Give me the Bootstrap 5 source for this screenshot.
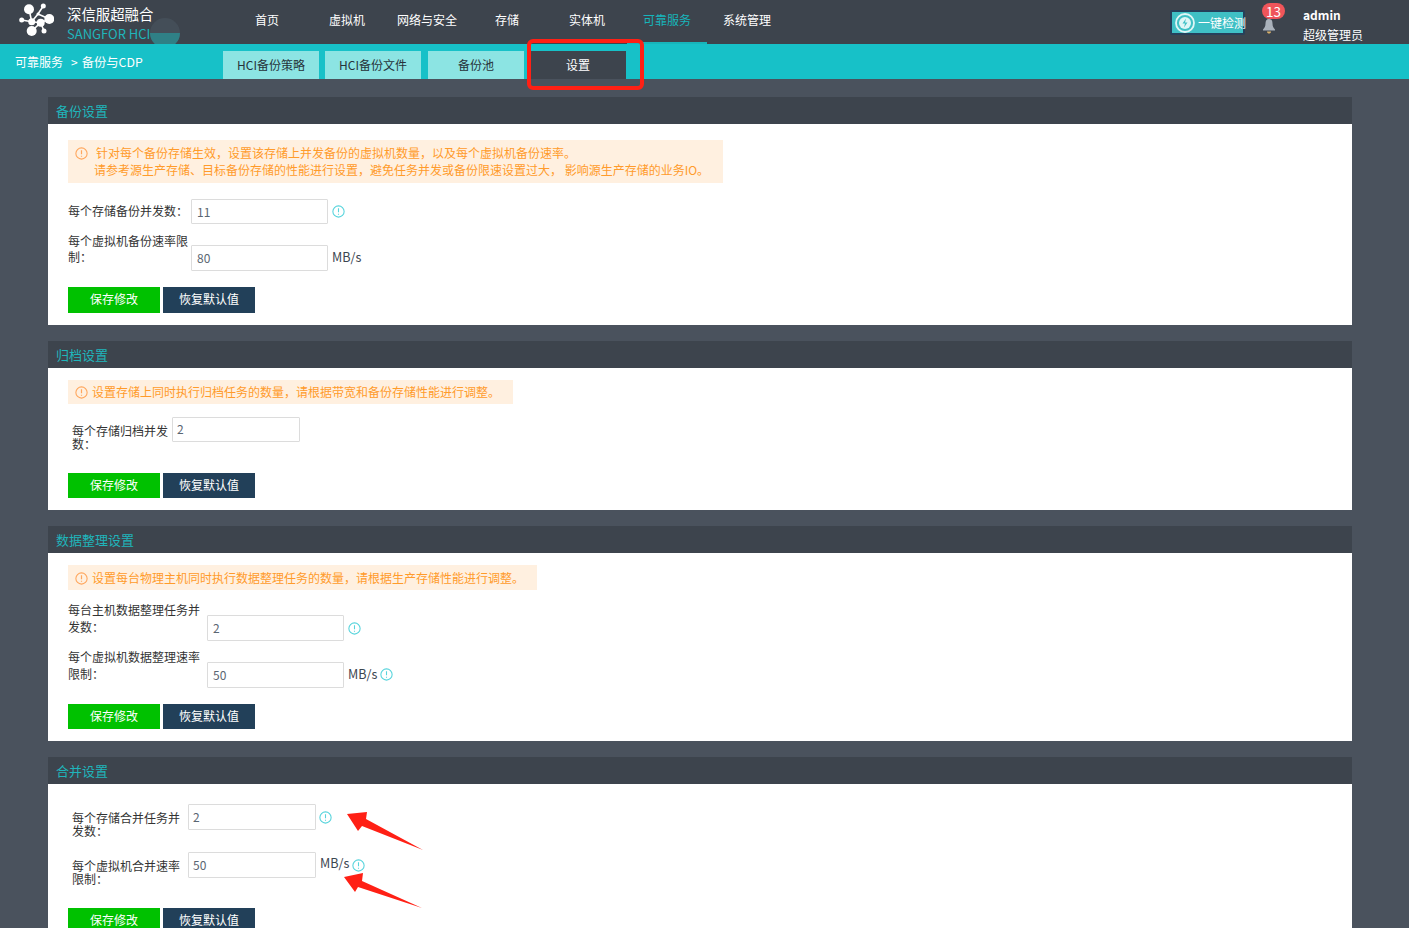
<!DOCTYPE html>
<html lang="zh-CN">
<head>
    <meta charset="UTF-8" />
    <title>可靠服务 - 备份与CDP</title>
    <link href="https://cdn.jsdelivr.net/npm/bootstrap@5.3.0/dist/css/bootstrap.min.css" rel="stylesheet" />
    <style>
        html, body { height: 100%; overflow: hidden; }
        body {
            background: #4a525d;
            font-family: "Noto Sans CJK SC", "Open Sans", sans-serif;
            font-size: 12px;
            color: #333;
        }
        .topbar { height: 44px; background: #3d444d; color: #fff; }
        .brand-box { width: 227px; position: relative; overflow: hidden; height: 44px; padding: 2px 0 0 18px; }
        .brand-logo { margin-right: 13px; flex: none; }
        .brand-name { font-size: 14.4px; line-height: 18px; padding-top: 3px; }
        .brand-sub { font-size: 13px; line-height: 18px; color: #1fb5bb; margin-top: 2px; }
        .spin-shape { position: absolute; left: 150px; top: 18px; }
        .main-nav .nav-link {
            width: 80px; height: 44px; line-height: 39px; padding: 0;
            text-align: center; color: #fff; font-size: 12px;
        }
        .main-nav .nav-link.active { color: #17b5bb; border-bottom: 2px solid #17b5bb; }
        .check-btn {
            position: absolute; left: 1170px; top: 10px; width: 75px; height: 25px;
            background: #3fc0c5; border: 2px solid #26405a; color: #fff; font-size: 12px;
            display: flex; align-items: center; white-space: nowrap; padding: 0 0 0 3px; border-radius: 2px;
        }
        .check-btn svg { margin-right: 3px; flex: none; }
        .bell-box { position: absolute; left: 1262px; top: 15px; }
        .bell-count {
            position: absolute; left: 1262px; top: 3px; width: 23px; height: 16px;
            background: #f0555a; color: #fff; border-radius: 8px; font-size: 13.5px; font-weight: 400;
            line-height: 16px; text-align: center; padding: 0;
        }
        .user-box { position: absolute; left: 1303px; top: 5px; line-height: 20px; }
        .subbar { height: 35px; background: #17c1c8; color: #fff; }
        .crumb-box { width: 223px; padding: 9px 0 0 15px; line-height: 18px; }
        .crumb-sep { margin: 0 4px 0 8px; }
        .crumb-box .crumb-end { font-size: 12.3px; }
        .tab-row { padding-top: 7px; gap: 6px; }
        .tab-row .nav-link {
            width: 96px; height: 28px; line-height: 27px; padding: 0; text-align: center;
            background: #8ce4e3; color: #27333a; font-size: 12px; border-radius: 0;
        }
        .tab-row .nav-link.tab-third { margin-left: 1px; }
        .tab-row .nav-link.active { background: #3d444d; color: #fff; }
        .panels { padding: 18px 57px 0 48px; display: flex; flex-direction: column; gap: 16px; }
        .panel-box { border: 0; border-radius: 0; background: #fff; }
        .panel-box .card-header {
            height: 27px; padding: 0 8px; line-height: 27px; background: #3d444d; color: #1fb5bb;
            font-size: 13px; border: 0; border-radius: 0;
        }
        .panel-box .card-body { padding: 0 20px; }
        .tip-box {
            background: #fff0e0; color: #ff9b2b; border: 0; border-radius: 0; margin: 0;
            padding: 5px 7px; line-height: 17px; font-size: 12px; width: fit-content;
        }
        .tip-icon { vertical-align: -2px; margin-right: 4px; }
        .form-line { display: flex; }
        .field-label { line-height: 16px; flex: none; margin: 0; }
        .field-label.wide-lead { line-height: 17px; margin-top: -1px; }
        .field-label.tight { line-height: 13px; padding-left: 4px; margin-top: 7px; }
        .w-a { width: 123px; }
        .w-b { width: 139px; }
        .w-c { width: 104px; }
        .w-d { width: 120px; }
        .field-input.form-control {
            width: 137px; height: 26px; padding: 0 5px 2px; font-size: 12px; color: #5b6672;
            border: 1px solid #dcdcdc; border-radius: 1px; flex: none; min-height: 0;
        }
        .field-input.short.form-control { width: 128px; padding: 0 4px 2px; }
        .unit-text { margin-left: 4px; color: #3c4650; font-size: 12.6px; }
        .info-mark { margin-left: 4px; flex: none; }
        .btn-line { display: flex; gap: 3px; }
        .btn-line .btn {
            width: 92px; height: 26px; padding: 0 0 2px; font-size: 12px; line-height: 24px;
            color: #fff; border: 0; border-radius: 0;
        }
        .btn-line.slim .btn { height: 25px; line-height: 23px; }
        .btn-save { background: #00c100; }
        .btn-reset { background: #224059; }
        .mark-layer { position: absolute; left: 0; top: 0; pointer-events: none; }
    </style>
</head>
<body>

<div class="topbar d-flex position-relative">
    <div class="brand-box d-flex">
        <svg class="brand-logo" width="36" height="36" viewBox="18 2 36 36">
            <path stroke="#fff" stroke-width="1.6" fill="none" d="M29 9L31.700 21.700L21.700 20M31.700 21.700L38 14L43.300 6M38 14L49.300 19L40.700 22.700L31.700 21.700M40.700 22.700L31.700 31M40.700 22.700L44 31" />
            <g fill="#fff">
                <circle cx="29" cy="9.300" r="5" />
                <circle cx="43.300" cy="6" r="2.500" />
                <circle cx="49.300" cy="19" r="5" />
                <circle cx="31.700" cy="31" r="5" />
                <circle cx="21.700" cy="20" r="2.500" />
                <circle cx="31.700" cy="21.700" r="3.500" />
                <circle cx="40.700" cy="22.700" r="4" />
                <circle cx="44" cy="31" r="2.500" />
                <circle cx="38" cy="14" r="1.500" />
            </g>
        </svg>
        <div>
            <div class="brand-name">深信服超融合</div>
            <div class="brand-sub">SANGFOR HCI</div>
        </div>
        <svg class="spin-shape" width="30" height="26" viewBox="0 0 30 26">
            <circle cx="15" cy="15" r="15" fill="#47525c" opacity=".75" />
            <path d="M0 15A15 15 0 0 0 30 15Z" fill="#2f8086" />
        </svg>
    </div>
    <nav class="nav main-nav">
        <a class="nav-link" href="#">首页</a>
        <a class="nav-link" href="#">虚拟机</a>
        <a class="nav-link" href="#">网络与安全</a>
        <a class="nav-link" href="#">存储</a>
        <a class="nav-link" href="#">实体机</a>
        <a class="nav-link active" href="#">可靠服务</a>
        <a class="nav-link" href="#">系统管理</a>
    </nav>
    <button class="check-btn" type="button">
        <svg width="20" height="20" viewBox="0 0 20 20">
            <circle cx="10" cy="10" r="9" fill="none" stroke="#dff6f6" stroke-width="1.800" />
            <circle cx="10" cy="10" r="6" fill="#dff6f6" />
            <path d="M11 5.500L7.500 10.500H10L9 14.500L12.500 9.500H10Z" fill="#3fc0c5" />
        </svg>
        一键检测
    </button>
    <div class="bell-box">
        <svg width="14" height="16" viewBox="0 0 14 16">
            <path d="M7 1C4.500 1 3.500 3 3.500 5.500C3.500 8.500 2.500 10 1 11.500V12.500H13V11.500C11.500 10 10.500 8.500 10.500 5.500C10.500 3 9.500 1 7 1Z" fill="#aab2bb" />
            <path d="M5 13.500H9C9 15 8 15.500 7 15.500S5 15 5 13.500Z" fill="#d8b06a" />
        </svg>
    </div>
    <span class="badge bell-count">13</span>
    <div class="user-box">
        <div class="fw-bold">admin</div>
        <div>超级管理员</div>
    </div>
</div>

<div class="subbar d-flex">
    <div class="crumb-box">可靠服务<span class="crumb-sep">&gt;</span><span class="crumb-end">备份与CDP</span></div>
    <nav class="nav tab-row">
        <a class="nav-link" href="#">HCI备份策略</a>
        <a class="nav-link" href="#">HCI备份文件</a>
        <a class="nav-link tab-third" href="#">备份池</a>
        <a class="nav-link active" href="#">设置</a>
    </nav>
</div>

<div class="panels">

    <!-- 备份设置 -->
    <div class="card panel-box">
        <div class="card-header">备份设置</div>
        <div class="card-body pt-3" style="height:201px">
            <div class="alert tip-box" style="width:655px;height:43px;padding-top:4px">
                <svg class="tip-icon me-2" width="13" height="13" viewBox="0 0 12 12"><circle cx="6" cy="6" r="5.200" fill="none" stroke="#ffa65c" stroke-width="1" /><path d="M6 3V6.800M6 8V9" stroke="#ffa65c" stroke-width="1.100" /></svg>针对每个备份存储生效，设置该存储上并发备份的虚拟机数量，以及每个虚拟机备份速率。<br>
                <span class="d-inline-block" style="padding-left:19px">请参考源生产存储、目标备份存储的性能进行设置，避免任务并发或备份限速设置过大， 影响源生产存储的业务IO。</span>
            </div>
            <div class="form-line align-items-center" style="margin-top:16px">
                <label class="field-label w-a" style="margin-top:-2px">每个存储备份并发数：</label>
                <input class="form-control field-input" value="11" style="height:25px;padding-bottom:1px" />
                <svg class="info-mark" width="13" height="13" viewBox="0 0 12 12" style="margin-top:-1px"><circle cx="6" cy="6" r="5.200" fill="none" stroke="#57d4dc" stroke-width="1" /><path d="M6 3V6.800M6 8V9" stroke="#57d4dc" stroke-width="1" /></svg>
            </div>
            <div class="form-line" style="margin-top:9px;height:38px">
                <label class="field-label w-a">每个虚拟机备份速率限制：</label>
                <input class="form-control field-input align-self-end" value="80" />
                <span class="unit-text align-self-end" style="padding-bottom:4px">MB/s</span>
            </div>
            <div class="btn-line" style="margin-top:16px">
                <button class="btn btn-save">保存修改</button>
                <button class="btn btn-reset">恢复默认值</button>
            </div>
        </div>
    </div>

    <!-- 归档设置 -->
    <div class="card panel-box">
        <div class="card-header">归档设置</div>
        <div class="card-body" style="height:142px;padding-top:12px">
            <div class="alert tip-box" style="width:445px;height:24px;padding-top:3px">
                <svg class="tip-icon" width="13" height="13" viewBox="0 0 12 12"><circle cx="6" cy="6" r="5.200" fill="none" stroke="#ffa65c" stroke-width="1" /><path d="M6 3V6.800M6 8V9" stroke="#ffa65c" stroke-width="1.100" /></svg>设置存储上同时执行归档任务的数量，请根据带宽和备份存储性能进行调整。
            </div>
            <div class="form-line" style="margin-top:13px;height:43px">
                <label class="field-label tight w-c">每个存储归档并发数：</label>
                <input class="form-control field-input short" value="2" style="height:25px" />
            </div>
            <div class="btn-line slim" style="margin-top:13px">
                <button class="btn btn-save">保存修改</button>
                <button class="btn btn-reset">恢复默认值</button>
            </div>
        </div>
    </div>

    <!-- 数据整理设置 -->
    <div class="card panel-box">
        <div class="card-header">数据整理设置</div>
        <div class="card-body" style="height:188px;padding-top:12px">
            <div class="alert tip-box" style="width:469px;height:25px;padding-top:4px">
                <svg class="tip-icon" width="13" height="13" viewBox="0 0 12 12"><circle cx="6" cy="6" r="5.200" fill="none" stroke="#ffa65c" stroke-width="1" /><path d="M6 3V6.800M6 8V9" stroke="#ffa65c" stroke-width="1.100" /></svg>设置每台物理主机同时执行数据整理任务的数量，请根据生产存储性能进行调整。
            </div>
            <div class="form-line" style="margin-top:12px;height:39px">
                <label class="field-label wide-lead w-b">每台主机数据整理任务并发数：</label>
                <input class="form-control field-input align-self-end" value="2" />
                <svg class="info-mark align-self-end" style="margin-bottom:6px" width="13" height="13" viewBox="0 0 12 12"><circle cx="6" cy="6" r="5.200" fill="none" stroke="#57d4dc" stroke-width="1" /><path d="M6 3V6.800M6 8V9" stroke="#57d4dc" stroke-width="1" /></svg>
            </div>
            <div class="form-line" style="margin-top:8px;height:39px">
                <label class="field-label wide-lead w-b">每个虚拟机数据整理速率限制：</label>
                <input class="form-control field-input align-self-end" value="50" />
                <span class="unit-text align-self-end" style="padding-bottom:4px">MB/s</span>
                <svg class="info-mark align-self-end" style="margin-bottom:7px;margin-left:3px" width="13" height="13" viewBox="0 0 12 12"><circle cx="6" cy="6" r="5.200" fill="none" stroke="#57d4dc" stroke-width="1" /><path d="M6 3V6.800M6 8V9" stroke="#57d4dc" stroke-width="1" /></svg>
            </div>
            <div class="btn-line slim" style="margin-top:16px">
                <button class="btn btn-save">保存修改</button>
                <button class="btn btn-reset">恢复默认值</button>
            </div>
        </div>
    </div>

    <!-- 合并设置 -->
    <div class="card panel-box">
        <div class="card-header">合并设置</div>
        <div class="card-body" style="padding-top:20px;padding-bottom:12px">
            <div class="form-line" style="height:48px">
                <label class="field-label tight w-d">每个存储合并任务并发数：</label>
                <input class="form-control field-input short" value="2" />
                <svg class="info-mark" width="13" height="13" viewBox="0 0 12 12" style="margin:7px 0 0 3px"><circle cx="6" cy="6" r="5.200" fill="none" stroke="#57d4dc" stroke-width="1" /><path d="M6 3V6.800M6 8V9" stroke="#57d4dc" stroke-width="1" /></svg>
            </div>
            <div class="form-line" style="height:56px">
                <label class="field-label tight w-d">每个虚拟机合并速率限制：</label>
                <input class="form-control field-input short" value="50" />
                <span class="unit-text" style="padding-top:2px">MB/s</span>
                <svg class="info-mark" width="13" height="13" viewBox="0 0 12 12" style="margin:7px 0 0 3px"><circle cx="6" cy="6" r="5.200" fill="none" stroke="#57d4dc" stroke-width="1" /><path d="M6 3V6.800M6 8V9" stroke="#57d4dc" stroke-width="1" /></svg>
            </div>
            <div class="btn-line">
                <button class="btn btn-save">保存修改</button>
                <button class="btn btn-reset">恢复默认值</button>
            </div>
        </div>
    </div>
</div>

<!-- red annotations drawn over the screenshot -->
<svg class="mark-layer" width="1409" height="928" viewBox="0 0 1409 928">
    <rect x="529" y="41" width="113" height="47" rx="4" fill="none" stroke="#ff2015" stroke-width="4" />
    <polygon fill="#ff2015" points="347,814 367,812 366,819 423,850 362,826 358,831" />
    <polygon fill="#ff2015" points="344,877 363,873 362,881 422,908 358,887 355,892" />
</svg>

</body>
</html>
